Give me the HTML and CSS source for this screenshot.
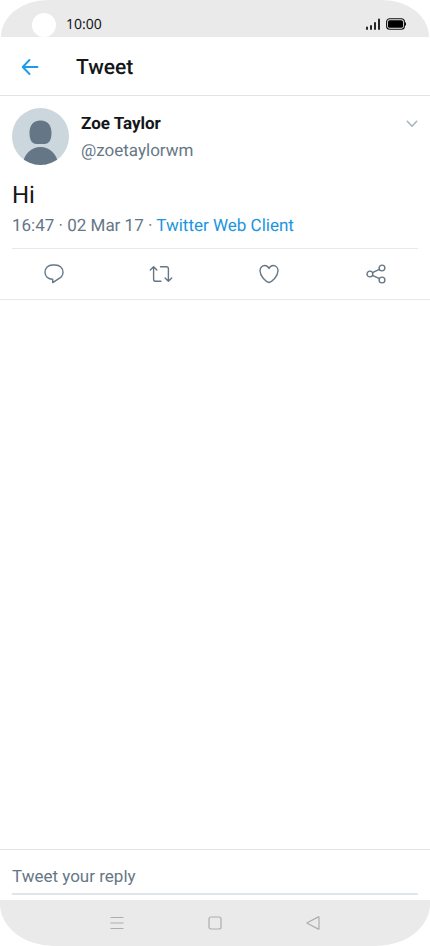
FILE: index.html
```html
<!DOCTYPE html>
<html lang="en">
<head>
<meta charset="utf-8">
<meta name="viewport" content="width=device-width, initial-scale=1">
<title>Tweet</title>
<link rel="stylesheet" href="styles.css">
</head>
<body>
<div class="status-bar">
  <span class="camera"></span>
  <span class="clock">10:00</span>
  <svg class="signal" width="14" height="12" viewBox="0 0 14 12" aria-hidden="true"><path d="M1 9.500V11M5 8V11M9 5V11M13 1.500V11" fill="none" stroke="#111" stroke-width="1.800" stroke-linecap="round"/></svg>
  <svg class="battery" width="20" height="12" viewBox="0 0 20 12" aria-hidden="true"><rect x=".6" y=".8" width="17.800" height="10.400" rx="3" fill="none" stroke="#111" stroke-width="1.100"/><rect x="2" y="2.200" width="15" height="7.600" rx="1.600" fill="#000"/><path d="M19.400 4.500v3" stroke="#111" stroke-width="1.200"/></svg>
</div>
<header class="app-bar">
  <button class="icon-button" type="button" aria-label="Back">
    <svg width="18" height="18" viewBox="0 0 18 18"><path d="M16.500 9H2M8.500 2L1.700 9l6.800 7" fill="none" stroke="#1d9bea" stroke-width="1.900" stroke-linecap="round" stroke-linejoin="round"/></svg>
  </button>
  <h1 class="title">Tweet</h1>
</header>
<main class="content">
  <article class="tweet">
    <div class="author">
      <svg class="avatar" width="57" height="57" viewBox="0 0 57 57" aria-hidden="true">
        <defs><clipPath id="disc"><circle cx="28.500" cy="28.500" r="28.500"/></clipPath></defs>
        <g clip-path="url(#disc)"><path d="M0 0h57v57H0z" fill="#ccd6dd"/><path d="M28.500 12.500C21 12.500 17.500 17.500 17.500 25c0 7 2.500 11 7 11h8c4.500 0 7-4 7-11 0-7.500-3.500-12.500-11-12.500zM10.500 57c1.500-11.500 9-18 18-18s16.500 6.500 18 18z" fill="#657786"/></g>
      </svg>
      <div class="names">
        <a class="name" href="#">Zoe Taylor</a>
        <a class="handle" href="#">@zoetaylorwm</a>
      </div>
      <button class="more" type="button" aria-label="More options">
        <svg width="12" height="8" viewBox="0 0 12 8"><path d="M1.300 1.300L6 6.200l4.700-4.900" fill="none" stroke="#aab5bd" stroke-width="1.600" stroke-linecap="round" stroke-linejoin="round"/></svg>
      </button>
    </div>
    <p class="text">Hi</p>
    <p class="meta">16:47 · 02 Mar 17 · <a class="source" href="#">Twitter Web Client</a></p>
  </article>
  <div class="actions">
    <button class="action" type="button" aria-label="Reply"><svg width="20" height="20" viewBox="0 0 20 20"><path d="M8.700 15.200C4 15.200 1 12.200 1 8.200S4.200 1 8.500 1h2.800C15.700 1 19 4.200 19 8.200c0 2.700-1.500 4.800-3.800 6.200L8.700 18.600z"/></svg></button>
    <button class="action" type="button" aria-label="Retweet"><svg width="24" height="20" viewBox="0 0 24 20"><path d="M1.300 6L4.600 2.700 7.900 6M4.600 3v12.200c0 1.300.8 2.100 2.100 2.100H12M11.500 2.700h5.800c1.300 0 2.100.8 2.100 2.100V17M16.100 14l3.300 3.300 3.300-3.300"/></svg></button>
    <button class="action" type="button" aria-label="Like"><svg width="20" height="20" viewBox="0 0 20 20"><path d="M10 18.500C7 17.800 1 12.500 1 6.800 1 3.700 3.200 1.500 5.800 1.500 7.700 1.500 9.200 2.600 10 4.600c.8-2 2.300-3.100 4.200-3.100 2.600 0 4.800 2.200 4.800 5.300 0 5.700-6 11-9 11.700z"/></svg></button>
    <button class="action" type="button" aria-label="Share"><svg width="20" height="20" viewBox="0 0 20 20"><circle cx="3.900" cy="10" r="2.900"/><circle cx="16" cy="4" r="2.900"/><circle cx="16" cy="16" r="2.900"/><path d="M6.500 8.700l6.900-3.400M6.500 11.300l6.900 3.400"/></svg></button>
  </div>
</main>
<form class="reply">
  <input class="reply-input" type="text" placeholder="Tweet your reply" aria-label="Tweet your reply">
</form>
<nav class="system-nav" aria-label="System">
  <button class="nav-key" type="button" aria-label="Recent apps"><svg width="14" height="14" viewBox="0 0 14 14"><path d="M.5 1.500h13M.5 7h13M.5 12.500h13"/></svg></button>
  <button class="nav-key" type="button" aria-label="Home"><svg width="14" height="14" viewBox="0 0 14 14"><rect x="1" y="1" width="12" height="12" rx="2"/></svg></button>
  <button class="nav-key" type="button" aria-label="Back"><svg width="14" height="14" viewBox="0 0 14 14"><path d="M13 1.200v11.600c0 .4-.3.500-.6.300L1.200 7.300c-.3-.2-.3-.4 0-.6L12.400.9c.3-.2.600-.1.600.3z"/></svg></button>
</nav>
</body>
</html>
```
FILE: styles.css
```css
* {
  box-sizing: border-box;
}

body {
  margin: 0;
  min-height: 100vh;
  display: flex;
  flex-direction: column;
  background: #fff;
  color: #14171a;
  font: 17px/20px Roboto, "Liberation Sans", sans-serif;
  text-rendering: geometricPrecision;
}

button {
  display: flex;
  align-items: center;
  justify-content: center;
  padding: 0;
  border: 0;
  background: none;
}

a {
  color: inherit;
  text-decoration: none;
}

h1,
p {
  margin: 0;
}

svg {
  display: block;
  flex: none;
}

.status-bar {
  display: flex;
  align-items: center;
  height: 37px;
  margin: 0 1px;
  padding: 12px 23px 0 31px;
  border-radius: 48px 48px 0 0 / 38px 38px 0 0;
  background: #eaeaea;
}

.camera {
  width: 24px;
  height: 24px;
  border-radius: 50%;
  background: #fff;
}

.clock {
  margin: 0 auto 0 10px;
  font: 14px/20px "Noto Sans", sans-serif;
}

.signal,
.battery {
  margin-bottom: 2px;
}

.battery {
  margin-left: 6px;
}

.app-bar {
  display: flex;
  align-items: center;
  height: 59px;
  padding: 2px 12px 0;
  border-bottom: 1px solid #e1e4e6;
}

.icon-button {
  width: 36px;
  height: 36px;
}

.title {
  margin-left: 28px;
  padding-top: 2px;
  font-size: 21px;
  line-height: 28px;
  font-weight: 500;
}

.content {
  flex: 1;
}

.tweet {
  margin: 0 12px;
  padding: 12px 0;
  border-bottom: 1px solid #e6e9eb;
}

.author {
  display: flex;
  align-items: flex-start;
}

.names {
  display: flex;
  flex: 1;
  flex-direction: column;
  gap: 7px;
  padding: 6px 0 0 12px;
}

.name {
  font-weight: 700;
}

.handle,
.meta {
  color: #657786;
}

.more {
  height: 32px;
}

.text {
  margin: 14px 0 5px;
  font-size: 24px;
  line-height: 32px;
}

.source {
  color: #1b95e0;
}

.actions {
  display: grid;
  grid-template-columns: repeat(4, 1fr);
  border-bottom: 1px solid #e6e9eb;
}

.action {
  height: 50px;
}

.action svg {
  fill: none;
  stroke: #657786;
  stroke-width: 1.4;
  stroke-linecap: round;
  stroke-linejoin: round;
}

.reply {
  padding: 8px 12px 5px;
  border-top: 1px solid #e1e4e6;
}

.reply-input {
  display: block;
  width: 100%;
  height: 37px;
  padding: 0;
  border: 0;
  border-bottom: 2px solid #dfe5e8;
  border-radius: 0;
  background: none;
  color: inherit;
  font: inherit;
}

.reply-input::placeholder {
  color: #657786;
  opacity: 1;
}

.system-nav {
  display: flex;
  align-items: center;
  justify-content: center;
  gap: 54px;
  height: 46px;
  border-radius: 0 0 54px 54px / 0 0 42px 42px;
  background: #eaeaea;
}

.nav-key {
  width: 44px;
  height: 44px;
}

.nav-key svg {
  fill: none;
  stroke: #adadad;
  stroke-width: 1.2;
}
```
